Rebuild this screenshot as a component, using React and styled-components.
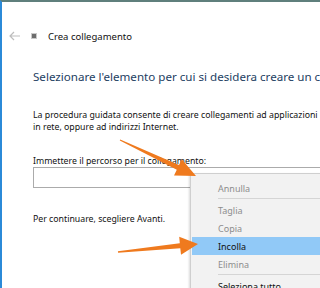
import * as React from 'react';
import styled, { createGlobalStyle } from 'styled-components';

const GlobalStyle = createGlobalStyle`
  html, body {
    margin: 0;
    padding: 0;
    width: 320px;
    height: 288px;
    overflow: hidden;
    background: #fff;
    font-family: "Noto Sans", "Open Sans", sans-serif;
  }
`;

const Frame = styled.div`
  position: relative;
  box-sizing: border-box;
  width: 320px;
  height: 288px;
  overflow: hidden;
  background: #fff;
  border-top: 2px solid #5f7f7c;
  border-left: 2px solid #2b8ad8;
`;

const Header = styled.div`
  display: flex;
  align-items: center;
  height: 20px;
  margin-top: 24px;
  padding-left: 7px;
`;

const BackButton = styled.div`
  display: flex;
  align-items: center;
  width: 14px;
  height: 14px;
`;

const AppIcon = styled.div`
  width: 4px;
  height: 4px;
  margin-left: 8px;
  background: #6d6d6d;
  border: 1px solid #c9c9c9;
`;

const Title = styled.span`
  margin-left: 11px;
  font-size: 9.5px;
  color: #111;
  white-space: nowrap;
`;

const Content = styled.div`
  display: flex;
  flex-direction: column;
  padding-left: 31px;
  overflow: hidden;
`;

const Heading = styled.h1`
  margin: 22px 0 0 0;
  font-size: 11.6px;
  line-height: 18px;
  font-weight: 400;
  color: #233e62;
  white-space: nowrap;
  overflow: hidden;
`;

const Text = styled.p`
  margin: ${p => p.$top}px 0 0 0;
  font-size: 8.75px;
  line-height: 12px;
  color: #111;
  white-space: nowrap;
`;

const PathInput = styled.div`
  box-sizing: border-box;
  width: 320px;
  height: 21px;
  margin-top: 0;
  border: 1px solid #ababab;
  background: #fff;
`;

const Menu = styled.div`
  position: absolute;
  left: 188px;
  top: 171px;
  width: 140px;
  padding: 5px 0 0 1px;
  background: #f2f2f2;
  border: 1px solid #cfcfcf;
  box-shadow: -1px 1px 2px rgba(0, 0, 0, 0.15);
`;

const MenuItem = styled.div`
  display: flex;
  align-items: center;
  height: 18px;
  padding-left: 26px;
  font-size: 9px;
  color: ${p => (p.$disabled ? '#8d8d8d' : '#111')};
  background: ${p => (p.$active ? '#91c9f7' : 'transparent')};
  white-space: nowrap;
`;

const Separator = styled.div`
  height: 1px;
  margin: 1px 0 2px 26px;
  background: #d5d5d5;
`;

const Overlay = styled.svg`
  position: absolute;
  left: -2px;
  top: -2px;
  width: 320px;
  height: 288px;
  pointer-events: none;
`;

const BackArrow = () => (
  <svg width="12" height="10" viewBox="0 0 12 10">
    <path d="M5 1 L1 5 L5 9 M1 5 H11" fill="none" stroke="#bdbdbd" strokeWidth="1.2" />
  </svg>
);

export default function App() {
  return (
    <>
      <GlobalStyle />
      <Frame>
        <Header>
          <BackButton>
            <BackArrow />
          </BackButton>
          <AppIcon />
          <Title>Crea collegamento</Title>
        </Header>
        <Content>
          <Heading>Selezionare l'elemento per cui si desidera creare un collegamento</Heading>
          <Text $top={23}>La procedura guidata consente di creare collegamenti ad applicazioni</Text>
          <Text $top={0}>in rete, oppure ad indirizzi Internet.</Text>
          <Text $top={22}>Immettere il percorso per il collegamento:</Text>
          <PathInput />
          <Text $top={25}>Per continuare, scegliere Avanti.</Text>
        </Content>
        <Menu>
          <MenuItem $disabled>Annulla</MenuItem>
          <Separator />
          <MenuItem $disabled>Taglia</MenuItem>
          <MenuItem $disabled>Copia</MenuItem>
          <MenuItem $active>Incolla</MenuItem>
          <MenuItem $disabled>Elimina</MenuItem>
          <Separator />
          <MenuItem>Seleziona tutto</MenuItem>
        </Menu>
        <Overlay viewBox="0 0 320 288">
          <polygon
            points="120.2,139.5 179,165.1 181.8,159.3 196,176 174,175.5 176.8,169.7 119.8,140.5"
            fill="#ef7a1e"
          />
          <polygon
            points="117.9,251.2 179.8,243.3 179.2,236.8 198,244 181,254.8 180.3,248.3 118.1,252.8"
            fill="#ef7a1e"
          />
        </Overlay>
      </Frame>
    </>
  );
}
